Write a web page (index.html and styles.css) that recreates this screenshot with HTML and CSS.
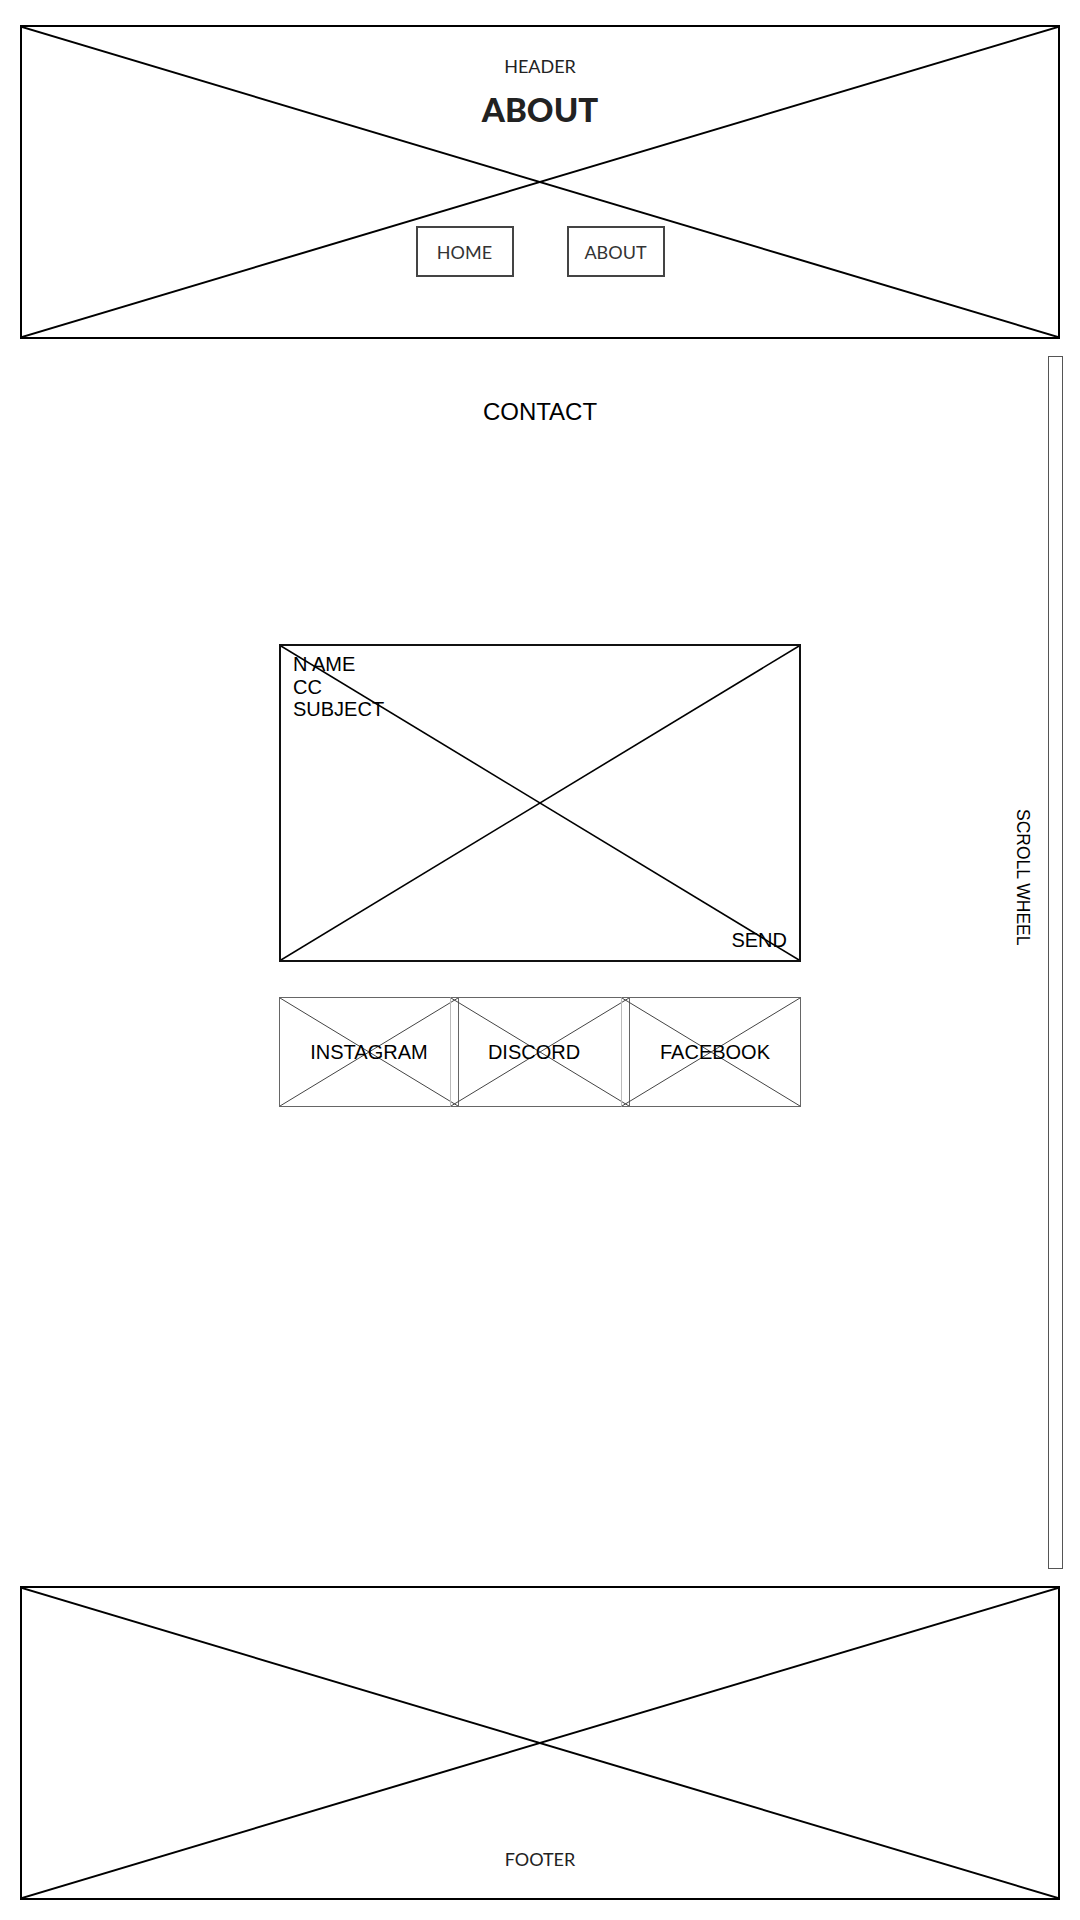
FILE: index.html
```html
<!DOCTYPE html>
<html lang="en-US">
  <head>
    <meta charset="UTF-8" />
    <title>Contact</title>
    <link rel="stylesheet" href="styles.css">
  </head>
  <body>
    <header class="banner">
      <svg class="cross" viewBox="0 0 100 100" preserveAspectRatio="none">
        <line x1="0" y1="0" x2="100" y2="100" />
        <line x1="100" y1="0" x2="0" y2="100" />
      </svg>
      <span class="label">HEADER</span>
      <h1 class="page-title">ABOUT</h1>
      <nav class="nav">
        <a class="nav-btn" href="#">HOME</a>
        <a class="nav-btn" href="#">ABOUT</a>
      </nav>
    </header>

    <main class="main">
      <section class="contact">
        <h2 class="contact-title">CONTACT</h2>

        <div class="mail-box">
          <svg class="cross" viewBox="0 0 100 100" preserveAspectRatio="none">
            <line x1="0" y1="0" x2="100" y2="100" />
            <line x1="100" y1="0" x2="0" y2="100" />
          </svg>
          <div class="fields">
            <span>N AME</span>
            <span>CC</span>
            <span>SUBJECT</span>
          </div>
          <span class="send">SEND</span>
        </div>

        <div class="socials">
          <div class="social">
            <svg class="cross" viewBox="0 0 100 100" preserveAspectRatio="none">
              <line x1="0" y1="0" x2="100" y2="100" />
              <line x1="100" y1="0" x2="0" y2="100" />
            </svg>
            <span>INSTAGRAM</span>
          </div>
          <div class="social social-mid">
            <svg class="cross" viewBox="0 0 100 100" preserveAspectRatio="none">
              <line x1="0" y1="0" x2="100" y2="100" />
              <line x1="100" y1="0" x2="0" y2="100" />
            </svg>
            <span>DISCORD</span>
          </div>
          <div class="social social-last">
            <svg class="cross" viewBox="0 0 100 100" preserveAspectRatio="none">
              <line x1="0" y1="0" x2="100" y2="100" />
              <line x1="100" y1="0" x2="0" y2="100" />
            </svg>
            <span>FACEBOOK</span>
          </div>
        </div>
      </section>

      <aside class="scroll-col">
        <span class="scroll-label">SCROLL WHEEL</span>
        <div class="scroll-bar"></div>
      </aside>
    </main>

    <footer class="banner footer">
      <svg class="cross" viewBox="0 0 100 100" preserveAspectRatio="none">
        <line x1="0" y1="0" x2="100" y2="100" />
        <line x1="100" y1="0" x2="0" y2="100" />
      </svg>
      <span class="label">FOOTER</span>
    </footer>
  </body>
</html>
```

FILE: styles.css
```css
body {
  margin: 0;
  background-color: #fff;
  font-family: "Liberation Sans", Arial, sans-serif;
  color: #000;
}

.cross {
  position: absolute;
  top: 0;
  left: 0;
  width: 100%;
  height: 100%;
  pointer-events: none;
}

.cross line {
  stroke: #000;
  stroke-width: 2;
  vector-effect: non-scaling-stroke;
}

/* header + footer placeholders */
.banner {
  position: relative;
  box-sizing: border-box;
  height: 314px;
  margin: 25px 20px 0;
  border: 2px solid #000;
  display: flex;
  flex-direction: column;
  align-items: center;
  padding-top: 28px;
  font-family: Lato, sans-serif;
  color: #222;
}

.label {
  font-size: 18px;
  line-height: 22px;
  position: relative;
}

.page-title {
  position: relative;
  margin: 12px 0 0;
  font-size: 33px;
  line-height: 40px;
  font-weight: 900;
}

.nav {
  position: relative;
  display: flex;
  gap: 53px;
  margin-top: 97px;
}

.nav-btn {
  box-sizing: border-box;
  width: 98px;
  height: 51px;
  border: 2px solid #444;
  background: #fff;
  display: flex;
  align-items: center;
  justify-content: center;
  font-size: 18px;
  color: #333;
  text-decoration: none;
}

.footer {
  margin: 0 20px 21px;
  justify-content: flex-end;
  padding-top: 0;
  padding-bottom: 28px;
}

/* middle */
.main {
  box-sizing: border-box;
  height: 1247px;
  display: grid;
  grid-template-columns: 1fr 522px 1fr;
}

.contact {
  grid-column: 2;
  display: flex;
  flex-direction: column;
}

.contact-title {
  margin: 59px 0 0;
  text-align: center;
  font-size: 24px;
  line-height: 28px;
  font-weight: normal;
}

.mail-box {
  position: relative;
  box-sizing: border-box;
  height: 318px;
  margin-top: 218px;
  border: 2px solid #111;
  padding: 7px 12px 9px 12px;
  display: flex;
  flex-direction: column;
  justify-content: space-between;
  font-size: 20px;
  line-height: 22.5px;
}

.mail-box .cross line {
  stroke-width: 1.6;
}

.fields {
  position: relative;
  display: flex;
  flex-direction: column;
}

.send {
  position: relative;
  align-self: flex-end;
}

.socials {
  display: flex;
  margin-top: 35px;
  height: 110px;
}

.social {
  position: relative;
  box-sizing: border-box;
  width: 180px;
  flex-shrink: 0;
  border: 1px solid #666;
  display: flex;
  align-items: center;
  justify-content: center;
  font-size: 20px;
}

.social + .social {
  margin-left: -9px;
  border-left-color: #bbb;
}

.social-mid {
  padding-right: 12px;
}

.social-last {
  padding-left: 8px;
}

.social .cross line {
  stroke: #444;
  stroke-width: 1;
}

.social span {
  position: relative;
}

.scroll-col {
  grid-column: 3;
  display: flex;
  justify-content: flex-end;
  padding: 17px 17px 17px 0;
}

.scroll-label {
  writing-mode: vertical-rl;
  font-size: 17.5px;
  line-height: 20px;
  margin-top: 453px;
  margin-right: 15px;
  align-self: flex-start;
}

.scroll-bar {
  box-sizing: border-box;
  width: 15px;
  border: 1px solid #555;
}
```
